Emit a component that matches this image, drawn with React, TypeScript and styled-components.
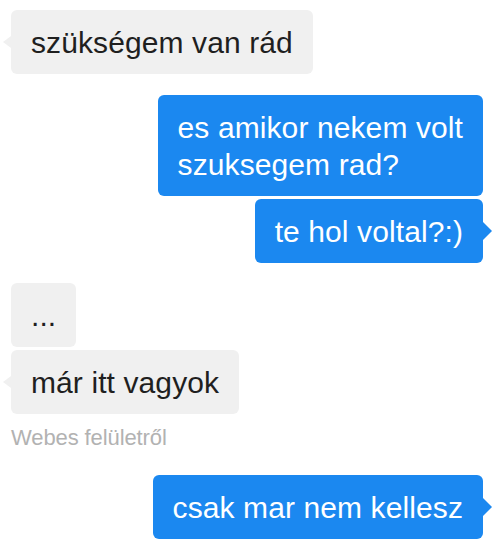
import React from 'react';
import styled, { createGlobalStyle, css } from 'styled-components';

const GlobalStyle = createGlobalStyle`
  html, body {
    margin: 0;
    padding: 0;
    background: #ffffff;
  }
  body {
    font-family: 'Liberation Sans', Arial, sans-serif;
    -webkit-font-smoothing: antialiased;
  }
`;

type Side = 'in' | 'out';

const StyledThread = styled.div`
  width: 500px;
  height: 550px;
  box-sizing: border-box;
  padding: 10px 17px 0 11px;
  display: flex;
  flex-direction: column;
`;

const Row = styled.div<{ $side: Side; $gap: number }>`
  display: flex;
  justify-content: ${(p) => (p.$side === 'out' ? 'flex-end' : 'flex-start')};
  margin-top: ${(p) => p.$gap}px;
`;

const Bubble = styled.div<{ $side: Side; $tail?: boolean }>`
  position: relative;
  box-sizing: border-box;
  min-height: 64px;
  padding: 14px 20px 13px;
  border-radius: 6px;
  font-size: 30px;
  line-height: 37px;
  letter-spacing: 0.1px;
  white-space: nowrap;

  ${(p) =>
    p.$side === 'out'
      ? css`
          background: #1b88f0;
          color: #ffffff;
        `
      : css`
          background: #f0f0f0;
          color: #1f1f1f;
        `}

  ${(p) =>
    p.$tail &&
    (p.$side === 'out'
      ? css`
          &::after {
            content: '';
            position: absolute;
            right: -9px;
            top: 50%;
            margin-top: -9px;
            border-style: solid;
            border-width: 9px 0 9px 9px;
            border-color: transparent transparent transparent #1b88f0;
          }
        `
      : css`
          &::after {
            content: '';
            position: absolute;
            left: -8px;
            top: 50%;
            margin-top: -6px;
            border-style: solid;
            border-width: 6px 8px 6px 0;
            border-color: transparent #f0f0f0 transparent transparent;
          }
        `)}
`;

const Caption = styled.div`
  margin-top: 12px;
  font-size: 22px;
  line-height: 24px;
  color: #b2b2b2;
  letter-spacing: -0.1px;
`;

const App = () => {
  return (
    <>
      <GlobalStyle />
      <StyledThread>
        <Row $side="in" $gap={0}>
          <Bubble $side="in" $tail>
            szükségem van rád
          </Bubble>
        </Row>
        <Row $side="out" $gap={21}>
          <Bubble $side="out">
            es amikor nekem volt
            <br />
            szuksegem rad?
          </Bubble>
        </Row>
        <Row $side="out" $gap={3}>
          <Bubble $side="out" $tail>
            te hol voltal?:)
          </Bubble>
        </Row>
        <Row $side="in" $gap={20}>
          <Bubble $side="in">...</Bubble>
        </Row>
        <Row $side="in" $gap={3}>
          <Bubble $side="in" $tail>
            már itt vagyok
          </Bubble>
        </Row>
        <Caption>Webes felületről</Caption>
        <Row $side="out" $gap={25}>
          <Bubble $side="out" $tail>
            csak mar nem kellesz
          </Bubble>
        </Row>
      </StyledThread>
    </>
  );
};

export default App;
